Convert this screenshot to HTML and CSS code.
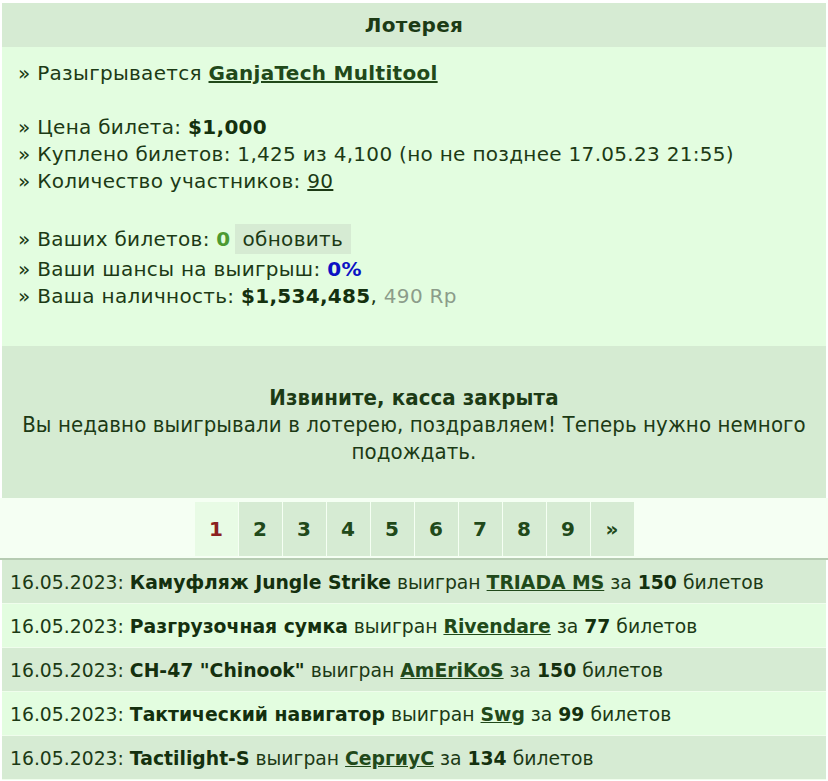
FILE: index.html
```html
<!DOCTYPE html>
<html lang="ru">
<head>
    <meta charset="UTF-8">
    <meta name="viewport" content="width=device-width, initial-scale=1.0">
    <title>Лотерея</title>
    <link rel="stylesheet" href="styles.css">
</head>
<body>
    <div class="lottery">
        <div class="lottery-head">Лотерея</div>

        <div class="lottery-info">
            <div class="info-group">
                <div class="info-line">» Разыгрывается <a href="#" class="prize">GanjaTech Multitool</a></div>
            </div>
            <div class="info-group">
                <div class="info-line">» Цена билета: <b>$1,000</b></div>
                <div class="info-line">» Куплено билетов: 1,425 из 4,100 (но не позднее 17.05.23 21:55)</div>
                <div class="info-line">» Количество участников: <a href="#" class="plain-link">90</a></div>
            </div>
            <div class="info-group last">
                <div class="info-line btn-line">» Ваших билетов: <b class="mine">0</b> <a href="#" class="refresh">обновить</a></div>
                <div class="info-line">» Ваши шансы на выигрыш: <b class="chance">0%</b></div>
                <div class="info-line">» Ваша наличность: <b>$1,534,485</b>, <span class="rp">490 Rp</span></div>
            </div>
        </div>

        <div class="lottery-closed">
            <div class="closed-title">Извините, касса закрыта</div>
            <div>Вы недавно выигрывали в лотерею, поздравляем! Теперь нужно немного подождать.</div>
        </div>
    </div>

    <div class="pager">
        <span class="page current">1</span>
        <a href="#" class="page">2</a>
        <a href="#" class="page">3</a>
        <a href="#" class="page">4</a>
        <a href="#" class="page">5</a>
        <a href="#" class="page">6</a>
        <a href="#" class="page">7</a>
        <a href="#" class="page">8</a>
        <a href="#" class="page">9</a>
        <a href="#" class="page">»</a>
    </div>

    <!-- last winners -->
    <div class="winners">
        <div class="winner">16.05.2023: <b>Камуфляж Jungle Strike</b> выигран <a href="#">TRIADA MS</a> за <b>150</b> билетов</div>
        <div class="winner">16.05.2023: <b>Разгрузочная сумка</b> выигран <a href="#">Rivendare</a> за <b>77</b> билетов</div>
        <div class="winner">16.05.2023: <b>CH-47 "Chinook"</b> выигран <a href="#">AmEriKoS</a> за <b>150</b> билетов</div>
        <div class="winner">16.05.2023: <b>Тактический навигатор</b> выигран <a href="#">Swg</a> за <b>99</b> билетов</div>
        <div class="winner">16.05.2023: <b>Tactilight-S</b> выигран <a href="#">СергиуС</a> за <b>134</b> билетов</div>
    </div>
</body>
</html>
```

FILE: styles.css
```css
body {
    margin: 0;
    padding: 3px 0 0 0;
    font-family: "DejaVu Sans", Verdana, sans-serif;
    font-size: 20px;
    letter-spacing: 0.3px;
    color: #1c3a15;
    background: #fff;
    overflow: hidden;
}

a {
    color: #21491a;
}

.lottery {
    margin: 0 2px;
}

.lottery-head {
    height: 44px;
    line-height: 45px;
    text-align: center;
    font-weight: bold;
    background: #d6ebd3;
}

.lottery-info {
    background: #e3fde0;
    padding: 13px 16px 36px;
    line-height: 27px;
}

.info-group {
    margin-bottom: 27px;
}

.info-group.last {
    margin-bottom: 0;
}

.info-line b {
    color: #14300e;
}

.prize {
    font-weight: bold;
}

.plain-link {
    color: #1c3a15;
}

.btn-line {
    height: 34px;
    display: flex;
    align-items: center;
    white-space: pre;
}

.info-line b.mine {
    color: #4c9a32;
}

.refresh {
    display: inline-block;
    margin-left: 4px;
    padding: 0 8px;
    line-height: 30px;
    background: #d6ebd3;
    color: #1c3a15;
    text-decoration: none;
}

.info-line b.chance {
    color: #0b12c4;
}

.rp {
    color: #8c9c8a;
}

.lottery-closed {
    background: #d5ebd2;
    padding: 38px 16px 33px;
    text-align: center;
    line-height: 27px;
    font-family: "DejaVu Sans Condensed", "DejaVu Sans", sans-serif;
    font-size: 22px;
    letter-spacing: 0.1px;
}

.closed-title {
    font-weight: bold;
}

.pager {
    display: flex;
    justify-content: center;
    gap: 1px;
    padding: 4px 0 2px;
    background: #f5fff3;
    border-bottom: 2px solid #b6ccb2;
}

.page {
    width: 43px;
    height: 54px;
    line-height: 54px;
    text-align: center;
    font-weight: bold;
    background: #d6ebd3;
    color: #21491a;
    text-decoration: none;
}

.page.current {
    background: #e8fbe5;
    color: #8b2020;
}

.winners {
    margin: 0 2px;
}

.winner {
    height: 43px;
    line-height: 45px;
    padding-left: 8px;
    border-bottom: 1px solid #effdec;
    background: #d6ebd3;
    white-space: nowrap;
    font-size: 18.8px;
    letter-spacing: 0;
}

.winner:nth-child(even) {
    background: #e3fde0;
}

.winner b {
    color: #14300e;
}

.winner a {
    font-weight: bold;
}
```
